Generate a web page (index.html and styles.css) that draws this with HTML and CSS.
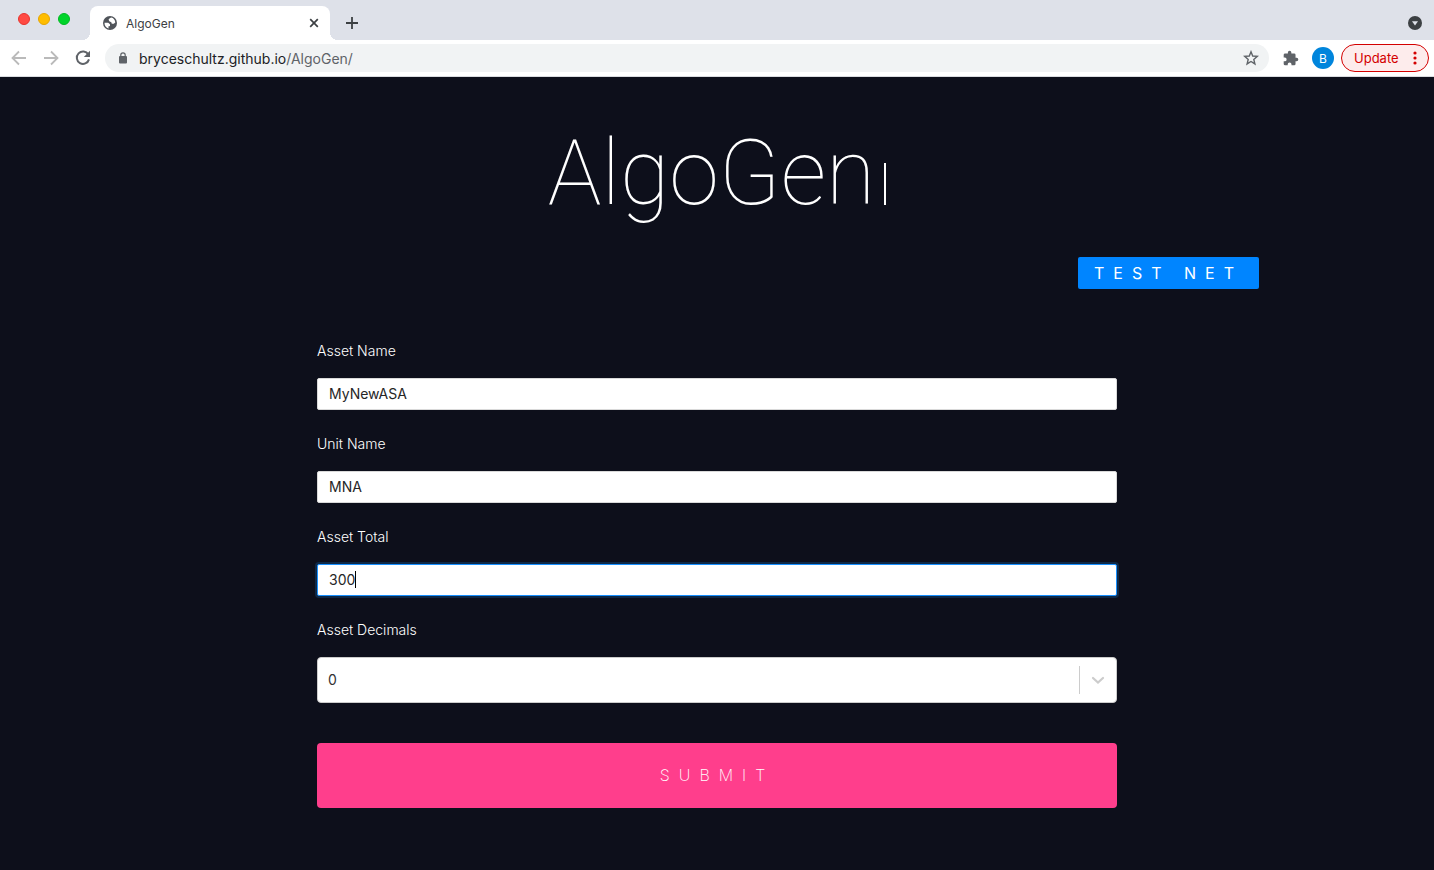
FILE: index.html
```html
<!DOCTYPE html>
<html lang="en">
<head>
<meta charset="utf-8">
<meta name="viewport" content="width=device-width, initial-scale=1">
<title>AlgoGen</title>
<link rel="stylesheet" href="styles.css">
</head>
<body>
<header class="chrome">
  <div class="tab-strip">
    <div class="lights">
      <span class="light light-close"></span>
      <span class="light light-min"></span>
      <span class="light light-max"></span>
    </div>
    <div class="tab">
      <svg class="globe" viewBox="0 0 14 14" aria-hidden="true"><circle cx="7" cy="7" r="7" fill="#50545a"/><path d="M8.200 1.500C6.800 2 6 2.700 5.600 3.700L6.300 5.300 8.300 6.200 8.800 7.700H10.800L12.300 6.400C12.200 3.900 10.500 2 8.200 1.500ZM1.500 6.800H5.200L7 8.300V9.900L5.300 10.500 5.700 12.400C3.200 11.900 1.300 9.500 1.500 6.800Z" fill="#fff"/></svg>
      <span class="tab-title">AlgoGen</span>
      <button class="icon-button tab-close" aria-label="Close tab"><svg width="10" height="10" viewBox="0 0 10 10"><path d="M1.2 1.2 8.8 8.8M8.8 1.2 1.2 8.8" stroke="#3c4043" stroke-width="1.7"/></svg></button>
    </div>
    <button class="icon-button new-tab" aria-label="New tab"><svg width="12" height="12" viewBox="0 0 12 12"><path d="M6 0V12M0 6H12" stroke="#3c4043" stroke-width="1.8"/></svg></button>
    <button class="icon-button tab-search" aria-label="Search tabs"><svg width="14" height="14" viewBox="0 0 14 14"><circle cx="7" cy="7" r="7" fill="#3c4043"/><path d="M4 5.2H10L7 9.4Z" fill="#dee1e9"/></svg></button>
  </div>
  <div class="toolbar">
    <nav class="nav">
      <button class="icon-button" aria-label="Back"><svg width="16" height="16" viewBox="0 0 16 16"><path d="M15 8H2M8 1.5 1.5 8 8 14.5" fill="none" stroke="#bababa" stroke-width="1.8"/></svg></button>
      <button class="icon-button" aria-label="Forward"><svg width="16" height="16" viewBox="0 0 16 16"><path d="M1 8H14M8 1.5 14.5 8 8 14.5" fill="none" stroke="#bababa" stroke-width="1.8"/></svg></button>
      <button class="icon-button" aria-label="Reload"><svg width="16" height="16" viewBox="0 0 16 16"><path d="M13.3 4.4A6.2 6.2 0 1 0 14 9.4" fill="none" stroke="#5f6368" stroke-width="2"/><path d="M15 .8V7H8.8Z" fill="#5f6368"/></svg></button>
    </nav>
    <div class="address">
      <svg width="10" height="12" viewBox="0 0 10 12" aria-hidden="true"><rect x="1" y="4" width="8" height="7.500" rx="1" fill="#5f6368"/><path d="M2.8 5V3A2.2 2.2 0 0 1 7.2 3V5" fill="none" stroke="#5f6368" stroke-width="1.2"/></svg>
      <span class="url"><span class="host">bryceschultz.github.io</span>/AlgoGen/</span>
      <button class="icon-button" aria-label="Bookmark"><svg width="16" height="16" viewBox="0 0 16 16"><path d="M8 1.8 9.7 6 14.3 6.4 10.8 9.4 11.9 13.9 8 11.5 4.1 13.9 5.2 9.4 1.7 6.4 6.3 6Z" fill="none" stroke="#5f6368" stroke-width="1.4"/></svg></button>
    </div>
    <button class="icon-button extensions" aria-label="Extensions"><svg width="16" height="16" viewBox="1 0 23 23"><path d="M20.5 11H19V7a2 2 0 0 0-2-2h-4V3.500a2.500 2.500 0 0 0-5 0V5H4a2 2 0 0 0-2 2v3.800h1.500a2.700 2.700 0 0 1 0 5.400H2V20a2 2 0 0 0 2 2h3.800v-1.500a2.700 2.700 0 0 1 5.400 0V22H17a2 2 0 0 0 2-2v-4h1.500a2.500 2.500 0 0 0 0-5Z" fill="#5f6368"/></svg></button>
    <button class="avatar" aria-label="Profile B">B</button>
    <button class="update">Update <svg width="4" height="14" viewBox="0 0 4 14" aria-hidden="true"><g fill="#d40000"><circle cx="2" cy="2" r="1.600"/><circle cx="2" cy="7" r="1.600"/><circle cx="2" cy="12" r="1.600"/></g></svg></button>
  </div>
</header>
<main class="page">
  <h1 class="brand"><span>AlgoGen</span><span class="brand-cursor"></span></h1>
  <div class="network"><button class="network-button">TEST NET</button></div>
  <form class="form">
    <div class="field">
      <label for="asset-name">Asset Name</label>
      <input class="text-input" id="asset-name" type="text" value="MyNewASA">
    </div>
    <div class="field">
      <label for="unit-name">Unit Name</label>
      <input class="text-input" id="unit-name" type="text" value="MNA">
    </div>
    <div class="field">
      <label for="asset-total">Asset Total</label>
      <div class="active-wrap">
        <input class="text-input text-input-active" id="asset-total" type="text" value="300">
        <span class="caret"></span>
      </div>
    </div>
    <div class="field">
      <label for="asset-decimals">Asset Decimals</label>
      <div class="select-box">
        <select id="asset-decimals"><option>0</option></select>
        <span class="indicator"><svg width="20" height="20" viewBox="0 0 20 20" aria-hidden="true"><path d="M5 8 10 12.600 15 8" fill="none" stroke="#ccc" stroke-width="2.200" stroke-linecap="round"/></svg></span>
      </div>
    </div>
    <button class="submit" type="button">SUBMIT</button>
  </form>
</main>
</body>
</html>
```
FILE: styles.css
```css
* { box-sizing: border-box; }
body {
  margin: 0;
  min-height: 100vh;
  background: #0d0f1b;
  font-family: Inter, "Liberation Sans", sans-serif;
  font-size: 14px;
}
button, input, select { font: inherit; margin: 0; }
button { border: 0; padding: 0; cursor: pointer; }
svg { display: block; flex: none; }
.icon-button {
  display: flex;
  align-items: center;
  justify-content: center;
  flex: none;
  background: none;
}

.chrome { border-bottom: 1px solid #dadce0; background: #fff; }
.tab-strip {
  display: flex;
  align-items: flex-end;
  height: 40px;
  padding-right: 12px;
  background: #dee1e9;
}
.lights { display: flex; gap: 8px; padding: 0 20px 15px 18px; }
.light { width: 12px; height: 12px; border-radius: 50%; }
.light-close { background: #ff4a43; border: 1px solid #e8332d; }
.light-min { background: #ffbd00; border: 1px solid #e6a500; }
.light-max { background: #00d42a; border: 1px solid #00b922; }
.tab {
  position: relative;
  display: flex;
  align-items: center;
  width: 240px;
  height: 34px;
  padding: 0 11px 0 13px;
  border-radius: 8px 8px 0 0;
  background: #fff;
  color: #3c4043;
  font-size: 12px;
}
.tab::before, .tab::after {
  content: "";
  position: absolute;
  bottom: 0;
  width: 8px;
  height: 8px;
}
.tab::before { left: -8px; background: radial-gradient(circle at 0 0, #dee1e9 8px, #fff 8px); }
.tab::after { right: -8px; background: radial-gradient(circle at 100% 0, #dee1e9 8px, #fff 8px); }
.globe { width: 14px; height: 14px; margin-right: 9px; }
.tab-title { flex: 1; }
.new-tab { margin: 0 auto 11px 16px; }
.tab-search { margin-bottom: 10px; }
.toolbar {
  display: flex;
  align-items: center;
  height: 36px;
  padding: 0 5px 0 11px;
}
.nav { display: flex; gap: 16px; margin-right: 14px; }
.address {
  display: flex;
  align-items: center;
  flex: 1;
  height: 28px;
  margin-right: 14px;
  padding: 0 10px 0 13px;
  border-radius: 14px;
  background: #f1f3f4;
  color: #5f6368;
}
.url { flex: 1; margin-left: 11px; }
.host { color: #202124; }
.avatar {
  width: 22px;
  height: 22px;
  margin: 0 7px 0 13px;
  border-radius: 50%;
  background: #0085dc;
  color: #fff;
  font-size: 12px;
}
.update {
  display: flex;
  align-items: center;
  justify-content: space-between;
  width: 88px;
  height: 28px;
  padding: 0 11px 0 12px;
  border: 1px solid #d40000;
  border-radius: 14px;
  background: #fdecec;
  color: #d40000;
  font-size: 13px;
}

.page { padding: 43px 0 62px; }
.brand {
  display: flex;
  align-items: flex-end;
  justify-content: center;
  height: 108px;
  margin: 0;
  color: #fff;
  font-family: Roboto, sans-serif;
  font-size: 90px;
  font-weight: 100;
  line-height: 108px;
}
.brand-cursor {
  width: 2px;
  height: 42px;
  margin: 0 0 23px 9px;
  background: #fff;
}
.network {
  display: flex;
  justify-content: flex-end;
  margin: 29px 175px 52px;
}
.network-button {
  height: 32px;
  padding: 0 16px;
  border-radius: 2px;
  background: #0085ff;
  color: #fff;
  font-size: 16px;
  letter-spacing: 9px;
}
.form {
  display: flex;
  flex-direction: column;
  gap: 24px;
  width: 100%;
  max-width: 800px;
  margin: 0 auto;
}
.field { display: flex; flex-direction: column; gap: 17px; }
.field label {
  color: #fff;
  font-weight: 300;
  line-height: 20px;
}
.text-input {
  display: block;
  width: 100%;
  height: 32px;
  padding: 3px 11px 5px;
  border: 1px solid #d9d9d9;
  border-radius: 2px;
  outline: 0;
  background: #fff;
  color: #262626;
}
.active-wrap { position: relative; }
.text-input-active { border-color: #1890ff; box-shadow: 0 0 0 2px rgba(24, 144, 255, .2); }
.caret {
  position: absolute;
  left: 38px;
  top: 7px;
  width: 1px;
  height: 17px;
  background: #000;
}
.select-box {
  display: flex;
  align-items: center;
  height: 46px;
  border: 1px solid #ccc;
  border-radius: 4px;
  background: #fff;
}
.select-box select {
  flex: 1;
  height: 44px;
  padding: 0 10px 2px;
  border: 0;
  outline: 0;
  appearance: none;
  background: none;
  color: #333;
}
.indicator {
  padding: 4px 8px;
  border-left: 1px solid #ccc;
  pointer-events: none;
}
.submit {
  height: 65px;
  margin-top: 16px;
  padding-bottom: 2px;
  border-radius: 4px;
  background: #ff3e8c;
  color: #fff;
  font-size: 16px;
  font-weight: 200;
  letter-spacing: 9px;
}
```
